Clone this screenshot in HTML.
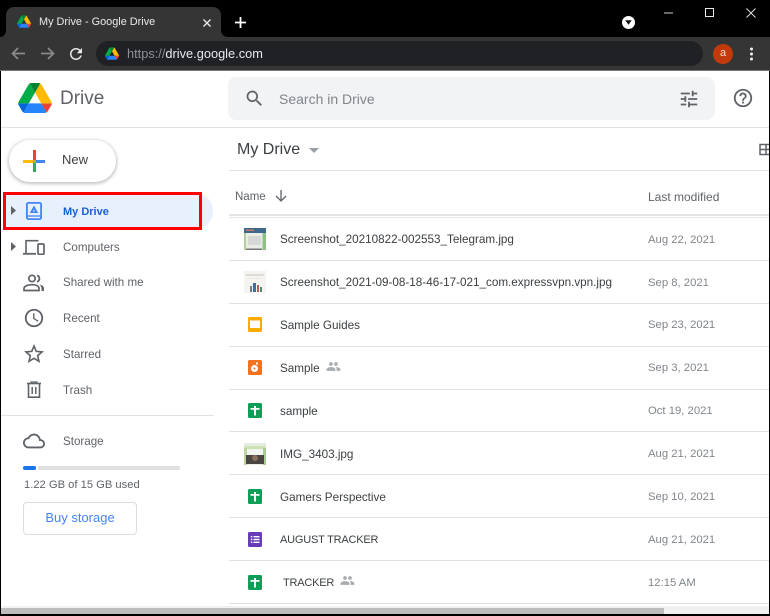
<!DOCTYPE html>
<html><head><meta charset="utf-8"><title>My Drive - Google Drive</title>
<style>
html,body{margin:0;padding:0;background:#fff}
#p{position:relative;width:770px;height:616px;overflow:hidden;background:#fff;font-family:"Liberation Sans",sans-serif;color:#5f6368}
#p div,#p svg,#p span{position:absolute}
.t{white-space:nowrap;font-size:12px;line-height:16px}
.l{color:#5f6368;font-weight:400;font-size:11.6px;left:63px;white-space:nowrap;line-height:16px}
.n{left:280px;color:#3c4043;font-size:11.7px;line-height:16px;white-space:nowrap}
.u{font-size:11px;letter-spacing:-.2px}
.d{left:648px;color:#80868b;font-size:11.3px;line-height:16px;white-space:nowrap}
.s{left:229px;width:540px;height:1px;background:#e0e1e4}
</style></head><body><div id="p">
<!-- chrome -->
<div style="left:0;top:0;width:770px;height:37px;background:#000"></div>
<div style="left:0;top:37px;width:770px;height:33px;background:#353535"></div>
<div style="left:0;top:70px;width:770px;height:1px;background:#777"></div>
<div style="left:6px;top:7px;width:215px;height:31px;background:#353535;border-radius:8px 8px 0 0"></div>
<svg style="left:0;top:30px" width="6" height="7" viewBox="0 0 6 7"><path d="M6 0v7H0c3 0 6-2 6-7z" fill="#353535"/></svg>
<svg style="left:221px;top:30px" width="7" height="7" viewBox="0 0 7 7"><path d="M0 0v7h7c-3 0-7-2-7-7z" fill="#353535"/></svg>
<svg style="left:17px;top:15px" width="14" height="13" viewBox="0 0 87.3 78"><use href="#dl"/></svg>
<div class="t" style="left:39px;top:14px;color:#e8eaed;font-size:10.9px">My Drive - Google Drive</div>
<svg style="left:200px;top:16px" width="14" height="14" viewBox="0 0 14 14"><path d="M3.500 3.500l7 7M10.500 3.500l-7 7" stroke="#e8eaed" stroke-width="1.400"/></svg>
<svg style="left:233px;top:15px" width="15" height="15" viewBox="0 0 15 15"><path d="M7.500 2v11M2 7.500h11" stroke="#fff" stroke-width="1.800"/></svg>
<div style="left:622px;top:16px;width:13px;height:13px;border-radius:50%;background:#fff"></div>
<svg style="left:622px;top:16px" width="13" height="13" viewBox="0 0 13 13"><path d="M3.200 4.300h6.600L6.500 8.800z" fill="#111"/></svg>
<div style="left:664px;top:12px;width:9px;height:2px;background:#666"></div>
<div style="left:705px;top:8px;width:7px;height:7px;border:1px solid #e8e8e8"></div>
<svg style="left:746px;top:8px" width="10" height="10" viewBox="0 0 10 10"><path d="M.5.5l9 9M9.500.5l-9 9" stroke="#ddd" stroke-width="1"/></svg>
<svg style="left:10px;top:45px" width="17" height="17" viewBox="0 0 17 17"><path d="M15 8.500H3M8 3L2.500 8.500 8 14" fill="none" stroke="#8a8a8a" stroke-width="1.700"/></svg>
<svg style="left:39px;top:45px" width="17" height="17" viewBox="0 0 17 17"><path d="M2 8.500h12M9 3l5.500 5.500L9 14" fill="none" stroke="#8a8a8a" stroke-width="1.700"/></svg>
<svg style="left:67px;top:45px" width="18" height="18" viewBox="0 0 24 24"><path fill="#e8eaed" d="M17.650 6.350C16.200 4.900 14.210 4 12 4c-4.420 0-7.990 3.580-7.990 8s3.570 8 7.990 8c3.730 0 6.840-2.550 7.730-6h-2.080c-.82 2.330-3.040 4-5.650 4-3.310 0-6-2.690-6-6s2.690-6 6-6c1.660 0 3.140.69 4.220 1.780L13 11h7V4l-2.350 2.350z"/></svg>
<div style="left:96px;top:41px;width:607px;height:25px;background:#202124;border-radius:13px"></div>
<svg style="left:105px;top:47px" width="14" height="13" viewBox="0 0 87.3 78"><use href="#dl"/></svg>
<div class="t" style="left:127px;top:46px;color:#8e9195;font-size:12.8px">https://<span style="position:static;color:#e8eaed">drive.google.com</span></div>
<div style="left:713px;top:44px;width:20px;height:20px;border-radius:50%;background:#c13a0c"></div>
<div class="t" style="left:713px;top:45px;width:20px;text-align:center;color:#f3d8cd;font-size:11px">a</div>
<svg style="left:749px;top:47px" width="5" height="14" viewBox="0 0 5 14"><circle cx="2.500" cy="2" r="1.500" fill="#eee"/><circle cx="2.500" cy="7" r="1.500" fill="#eee"/><circle cx="2.500" cy="12" r="1.500" fill="#eee"/></svg>

<!-- header -->
<svg style="left:18px;top:83px" width="34" height="30" viewBox="0 0 87.300 78"><defs><g id="dl"><path d="m6.600 66.850 3.850 6.650c.8 1.400 1.950 2.500 3.300 3.300l13.750-23.800h-27.500c0 1.550.4 3.100 1.200 4.500z" fill="#0066da"/><path d="m43.650 25-13.750-23.800c-1.350.8-2.500 1.900-3.300 3.300l-25.400 44a9.060 9.060 0 0 0 -1.200 4.500h27.500z" fill="#00ac47"/><path d="m73.550 76.800c1.350-.8 2.500-1.900 3.300-3.300l1.600-2.750 7.650-13.250c.8-1.400 1.200-2.950 1.200-4.500h-27.502l5.852 11.500z" fill="#ea4335"/><path d="m43.650 25 13.750-23.800c-1.350-.8-2.900-1.200-4.500-1.200h-18.500c-1.600 0-3.150.45-4.500 1.200z" fill="#00832d"/><path d="m59.800 53h-32.300l-13.750 23.800c1.350.8 2.900 1.200 4.500 1.200h50.800c1.600 0 3.150-.45 4.500-1.200z" fill="#2684fc"/><path d="m73.400 26.500-12.700-22c-.8-1.400-1.950-2.500-3.300-3.300l-13.750 23.800 16.150 28h27.450c0-1.550-.4-3.100-1.200-4.500z" fill="#ffba00"/></g></defs><use href="#dl"/></svg>
<div class="t" style="left:60px;top:86px;font-size:19px;line-height:26px;color:#5f6368">Drive</div>
<div style="left:228px;top:77px;width:487px;height:43px;background:#f1f3f4;border-radius:8px"></div>
<svg style="left:244px;top:88px" width="21" height="21" viewBox="0 0 24 24"><path fill="#5f6368" d="M15.500 14h-.79l-.28-.27C15.410 12.590 16 11.110 16 9.500 16 5.910 13.090 3 9.500 3S3 5.910 3 9.500 5.910 16 9.500 16c1.610 0 3.090-.59 4.230-1.570l.27.28v.79l5 4.990L20.490 19l-4.990-5zm-6 0C7.010 14 5 11.990 5 9.500S7.010 5 9.500 5 14 7.010 14 9.500 11.990 14 9.500 14z"/></svg>
<div class="t" style="left:279px;top:91px;font-size:14px;color:#80868b">Search in Drive</div>
<svg style="left:678px;top:88px" width="22" height="22" viewBox="0 0 24 24"><path fill="#5f6368" d="M3 17v2h6v-2H3zM3 5v2h10V5H3zm10 16v-2h8v-2h-8v-2h-2v6h2zM7 9v2H3v2h4v2h2V9H7zm14 4v-2H11v2h10zm-6-4h2V7h4V5h-4V3h-2v6z"/></svg>
<svg style="left:732px;top:87px" width="22" height="22" viewBox="0 0 24 24"><path fill="#5f6368" d="M11 18h2v-2h-2v2zm1-16C6.480 2 2 6.480 2 12s4.480 10 10 10 10-4.480 10-10S17.520 2 12 2zm0 18c-4.410 0-8-3.590-8-8s3.590-8 8-8 8 3.590 8 8-3.590 8-8 8zm0-14c-2.210 0-4 1.790-4 4h2c0-1.100.9-2 2-2s2 .9 2 2c0 2-3 1.750-3 5h2c0-2.250 3-2.500 3-5 0-2.210-1.790-4-4-4z"/></svg>
<div style="left:0;top:127px;width:770px;height:1px;background:#e0e1e4"></div>

<!-- sidebar -->
<div style="left:9px;top:140px;width:107px;height:42px;border-radius:21px;background:#fff;box-shadow:0 1px 3px 1px rgba(60,64,67,.3)"></div>
<svg style="left:23px;top:150px" width="22" height="22" viewBox="0 0 22 22"><rect x="10" y="0" width="3" height="10" fill="#ea4335"/><rect x="10" y="12" width="3" height="10" fill="#34a853"/><rect x="0" y="10" width="10" height="3" fill="#fbbc04"/><rect x="13" y="10" width="9" height="3" fill="#4285f4"/><rect x="10" y="10" width="3" height="3" fill="#c9a43c"/></svg>
<div class="t" style="left:62px;top:152px;font-size:13px;color:#3c4043">New</div>

<div style="left:3px;top:192px;width:210px;height:38px;background:#e8f0fe;border-radius:0 19px 19px 0"></div>
<div style="left:3px;top:192px;width:193px;height:32px;border:3px solid #f00"></div>
<svg style="left:11px;top:206px" width="5" height="9" viewBox="0 0 5 9"><path d="M0 0l5 4.500L0 9z" fill="#5f6368"/></svg>
<svg style="left:26px;top:202px" width="16" height="18" viewBox="0 0 16 18"><rect x=".9" y=".9" width="14.200" height="16.200" rx="1.500" fill="none" stroke="#4285f4" stroke-width="1.800"/><path d="M1 14h14" stroke="#4285f4" stroke-width="1.300"/><path d="M8 3.500l4.200 7.500H3.800z" fill="#4285f4"/><path d="M8 7.500l1 2H7z" fill="#e8f0fe"/></svg>
<div class="l" style="top:204px;color:#1a5fd0;font-weight:700;font-size:11px">My Drive</div>

<svg style="left:11px;top:242px" width="5" height="9" viewBox="0 0 5 9"><path d="M0 0l5 4.500L0 9z" fill="#5f6368"/></svg>
<svg style="left:23px;top:239px" width="22" height="16" viewBox="0 0 22 16"><path d="M3 14V1.700h12.500" fill="none" stroke="#5f6368" stroke-width="1.600"/><path d="M0 14.800h13" stroke="#5f6368" stroke-width="1.800"/><rect x="15" y="5" width="6" height="10.300" rx="1" fill="none" stroke="#5f6368" stroke-width="1.700"/></svg>
<div class="l" style="top:240px">Computers</div>

<svg style="left:23px;top:274px" width="22" height="18" viewBox="0 0 22 18"><circle cx="9" cy="4.500" r="3.200" fill="none" stroke="#5f6368" stroke-width="1.700"/><path d="M1 16.500v-2c0-2.500 4-3.800 8-3.800s7 1.300 7 3.800v2z" fill="none" stroke="#5f6368" stroke-width="1.700"/><path d="M14 1.500a3.200 3.200 0 0 1 0 6.200" fill="none" stroke="#5f6368" stroke-width="1.800"/><path d="M16.500 10.500c2.500.5 4.500 1.700 4.500 4v2.500h-2.500v-2.500c0-1.500-.8-3-2-4z" fill="#5f6368"/></svg>
<div class="l" style="top:275px">Shared with me</div>

<svg style="left:23px;top:307px" width="22" height="22" viewBox="0 0 24 24"><path fill="#5f6368" d="M11.990 2C6.470 2 2 6.480 2 12s4.470 10 9.990 10C17.520 22 22 17.520 22 12S17.520 2 11.990 2zM12 20c-4.420 0-8-3.580-8-8s3.580-8 8-8 8 3.580 8 8-3.580 8-8 8zm.5-13H11v6l5.250 3.150.75-1.230-4.500-2.670z"/></svg>
<div class="l" style="top:311px">Recent</div>

<svg style="left:22px;top:342px" width="24" height="24" viewBox="0 0 24 24"><path fill="#5f6368" d="M22 9.240l-7.190-.62L12 2 9.190 8.630 2 9.240l5.460 4.730L5.820 21 12 17.270 18.180 21l-1.630-7.030L22 9.240zM12 15.400l-3.760 2.270 1-4.280-3.320-2.880 4.380-.38L12 6.100l1.710 4.040 4.380.38-3.320 2.880 1 4.280L12 15.400z"/></svg>
<div class="l" style="top:347px">Starred</div>

<svg style="left:26px;top:381px" width="16" height="18" viewBox="0 0 16 18"><path d="M1 2.500h14" stroke="#5f6368" stroke-width="1.600"/><path d="M5 2.500V1h6v1.500" fill="none" stroke="#5f6368" stroke-width="1.200"/><path d="M2.500 3v13.200h11V3" fill="none" stroke="#5f6368" stroke-width="1.600"/><path d="M6.200 6v7M9.800 6v7" stroke="#5f6368" stroke-width="1.500"/></svg>
<div class="l" style="top:383px">Trash</div>

<div style="left:1px;top:415px;width:213px;height:1px;background:#e0e1e4"></div>
<svg style="left:23px;top:430px" width="22" height="22" viewBox="0 0 24 24"><path fill="#5f6368" d="M19.350 10.040C18.670 6.590 15.640 4 12 4 9.110 4 6.600 5.640 5.350 8.040 2.340 8.360 0 10.910 0 14c0 3.310 2.690 6 6 6h13c2.760 0 5-2.240 5-5 0-2.640-2.050-4.780-4.650-4.960zM19 18H6c-2.210 0-4-1.790-4-4s1.790-4 4-4h.71C7.370 7.690 9.480 6 12 6c3.040 0 5.500 2.460 5.500 5.500v.5H19c1.660 0 3 1.340 3 3s-1.340 3-3 3z"/></svg>
<div class="l" style="top:434px">Storage</div>
<div style="left:24px;top:466px;width:156px;height:4px;background:#e0e0e0;border-radius:2px"></div>
<div style="left:23px;top:466px;width:13px;height:4px;background:#1a73e8;border-radius:2px"></div>
<div style="left:36px;top:466px;width:2px;height:4px;background:#fff"></div>
<div class="t" style="left:24px;top:477px;color:#5f6368;font-size:11.2px">1.22 GB of 15 GB used</div>
<div style="left:23px;top:502px;width:112px;height:31px;border:1px solid #dadce0;border-radius:4px;background:#fff"></div>
<div class="t" style="left:23px;top:510px;width:114px;text-align:center;color:#4285f4;font-size:13px">Buy storage</div>

<!-- main -->
<div class="t" style="left:237px;top:140px;font-size:16px;line-height:20px;color:#3c4043">My Drive</div>
<svg style="left:309px;top:148px" width="10" height="5" viewBox="0 0 10 5"><path d="M0 0h10L5 5z" fill="#9aa0a6"/></svg>
<svg style="left:759px;top:143px" width="11" height="13" viewBox="0 0 11 13"><path d="M1 1.500h12v10H1zM1 6.500h12M7 1.500v10" fill="none" stroke="#5f6368" stroke-width="1.500"/></svg>
<div class="s" style="top:170px"></div>
<div class="t" style="left:235px;top:189px;font-size:11.5px;color:#5f6368">Name</div>
<svg style="left:274px;top:189px" width="14" height="14" viewBox="0 0 14 14"><path d="M7 1v11M2 7l5 5 5-5" fill="none" stroke="#5f6368" stroke-width="1.300"/></svg>
<div class="t" style="left:648px;top:189px;font-size:12px;color:#5f6368">Last modified</div>
<div class="s" style="top:214px;height:2px;background:#e4e5e8"></div>
<div class="s" style="top:217px;background:#e4e5e8"></div>

<!-- thumb 1 -->
<svg style="left:244px;top:228px" width="22" height="22" viewBox="0 0 22 22"><rect width="22" height="22" fill="#e8eee6"/><rect width="22" height="5" fill="#40688f"/><rect x="2" y="1.500" width="8" height="1.500" fill="#c8785a"/><rect y="5" width="2" height="17" fill="#b5cf9f"/><rect x="18.500" y="5" width="3.500" height="17" fill="#8fbf85"/><rect x="4" y="8" width="13" height="9" fill="#d5d8d5"/><rect x="2" y="20.500" width="16" height="1.500" fill="#777"/></svg>
<div class="n" style="top:232px">Screenshot_20210822-002553_Telegram.jpg</div>
<div class="d" style="top:232px">Aug 22, 2021</div>
<div class="s" style="top:260px"></div>

<!-- thumb 2 -->
<svg style="left:244px;top:271px" width="22" height="22" viewBox="0 0 22 22"><rect width="22" height="22" fill="#f5f4f0"/><rect x="2" y="3" width="18" height="2" fill="#dcdcd8"/><rect x="3" y="7" width="15" height="1" fill="#e8e8e4"/><rect x="6" y="15" width="2" height="6" fill="#6a7f95"/><rect x="9" y="12" width="3" height="9" fill="#3d6ea5"/><rect x="13" y="14" width="2" height="7" fill="#b95f55"/><rect x="16" y="16" width="2" height="5" fill="#4f8f70"/></svg>
<div class="n" style="top:275px">Screenshot_2021-09-08-18-46-17-021_com.expressvpn.vpn.jpg</div>
<div class="d" style="top:275px">Sep 8, 2021</div>
<div class="s" style="top:303px"></div>

<!-- slides -->
<svg style="left:248px;top:317px" width="14" height="15" viewBox="0 0 14 15"><rect width="14" height="15" rx="1.500" fill="#f9ab00"/><rect x="2" y="3.500" width="10" height="7.500" fill="#fff"/></svg>
<div class="n" style="top:318px">Sample Guides</div>
<div class="d" style="top:317px">Sep 23, 2021</div>
<div class="s" style="top:346px"></div>

<!-- orange -->
<svg style="left:248px;top:360px" width="14" height="15" viewBox="0 0 14 15"><rect width="14" height="15" rx="1.500" fill="#f4711f"/><circle cx="6.500" cy="8.500" r="3.500" fill="#fff"/><rect x="8" y="2.500" width="2" height="2" fill="#fff"/><circle cx="6.500" cy="8.500" r="1" fill="#f4711f"/></svg>
<div class="n" style="top:361px">Sample</div>
<svg style="left:326px;top:359px" width="15" height="15" viewBox="0 0 24 24"><path fill="#a8abaf" d="M16 11c1.660 0 2.990-1.340 2.990-3S17.660 5 16 5c-1.660 0-3 1.340-3 3s1.340 3 3 3zm-8 0c1.660 0 2.990-1.340 2.990-3S9.660 5 8 5C6.340 5 5 6.340 5 8s1.340 3 3 3zm0 2c-2.330 0-7 1.170-7 3.500V19h14v-2.500c0-2.330-4.670-3.500-7-3.500zm8 0c-.29 0-.62.020-.97.050 1.160.84 1.970 1.970 1.970 3.450V19h6v-2.500c0-2.330-4.670-3.500-7-3.500z"/></svg>
<div class="d" style="top:360px">Sep 3, 2021</div>
<div class="s" style="top:389px"></div>

<!-- sheet -->
<svg style="left:248px;top:403px" width="14" height="15" viewBox="0 0 14 15"><rect width="14" height="15" rx="1.500" fill="#0f9d58"/><path d="M6 3h2v9.500H6zM2.500 5h9v1.800h-9z" fill="#fff"/></svg>
<div class="n" style="top:404px">sample</div>
<div class="d" style="top:403px">Oct 19, 2021</div>
<div class="s" style="top:431px"></div>

<!-- thumb 3 -->
<svg style="left:244px;top:443px" width="22" height="22" viewBox="0 0 22 22"><rect width="22" height="22" fill="#e8ede4"/><rect x="0" y="3" width="22" height="3" fill="#cfe2b5"/><rect y="5" width="3" height="17" fill="#bcd59d"/><rect x="19" y="5" width="3" height="17" fill="#a8cc97"/><rect x="3" y="6" width="16" height="6" fill="#f2f4ee"/><rect x="2" y="12" width="18" height="9" fill="#4a4540"/><circle cx="11" cy="15" r="3" fill="#8a6f5c"/></svg>
<div class="n" style="top:447px">IMG_3403.jpg</div>
<div class="d" style="top:446px">Aug 21, 2021</div>
<div class="s" style="top:474px"></div>

<svg style="left:248px;top:489px" width="14" height="15" viewBox="0 0 14 15"><rect width="14" height="15" rx="1.500" fill="#0f9d58"/><path d="M6 3h2v9.500H6zM2.500 5h9v1.800h-9z" fill="#fff"/></svg>
<div class="n" style="top:490px">Gamers Perspective</div>
<div class="d" style="top:489px">Sep 10, 2021</div>
<div class="s" style="top:517px"></div>

<!-- forms -->
<svg style="left:248px;top:532px" width="14" height="15" viewBox="0 0 14 15"><rect width="14" height="15" rx="1.500" fill="#673ab7"/><path d="M5.500 4h6v1.400h-6zM5.500 6.800h6v1.400h-6zM5.500 9.600h6v1.400h-6zM2.800 4h1.500v1.400H2.800zM2.800 6.800h1.500v1.400H2.800zM2.800 9.600h1.500v1.400H2.800z" fill="#fff"/></svg>
<div class="n u" style="top:532px">AUGUST TRACKER</div>
<div class="d" style="top:532px">Aug 21, 2021</div>
<div class="s" style="top:560px"></div>

<svg style="left:248px;top:575px" width="14" height="15" viewBox="0 0 14 15"><rect width="14" height="15" rx="1.500" fill="#0f9d58"/><path d="M6 3h2v9.500H6zM2.500 5h9v1.800h-9z" fill="#fff"/></svg>
<div class="n u" style="top:575px;left:283px">TRACKER</div>
<svg style="left:340px;top:573px" width="15" height="15" viewBox="0 0 24 24"><path fill="#a8abaf" d="M16 11c1.660 0 2.990-1.340 2.990-3S17.660 5 16 5c-1.660 0-3 1.340-3 3s1.340 3 3 3zm-8 0c1.660 0 2.990-1.340 2.990-3S9.660 5 8 5C6.340 5 5 6.340 5 8s1.340 3 3 3zm0 2c-2.330 0-7 1.170-7 3.500V19h14v-2.500c0-2.330-4.670-3.500-7-3.500zm8 0c-.29 0-.62.020-.97.050 1.160.84 1.970 1.970 1.970 3.450V19h6v-2.500c0-2.330-4.670-3.500-7-3.500z"/></svg>
<div class="d" style="top:575px">12:15 AM</div>
<div class="s" style="top:603px"></div>

<!-- scrollbar and window edges -->
<div style="left:0;top:606px;width:770px;height:8px;background:#f1f1f1"></div>
<div style="left:0;top:608px;width:664px;height:6px;background:#bdbdbd"></div>
<div style="left:0;top:614px;width:770px;height:2px;background:#000"></div>
<div style="left:0;top:71px;width:1px;height:545px;background:#000"></div>
<div style="left:769px;top:71px;width:1px;height:545px;background:#000"></div>
</div></body></html>
